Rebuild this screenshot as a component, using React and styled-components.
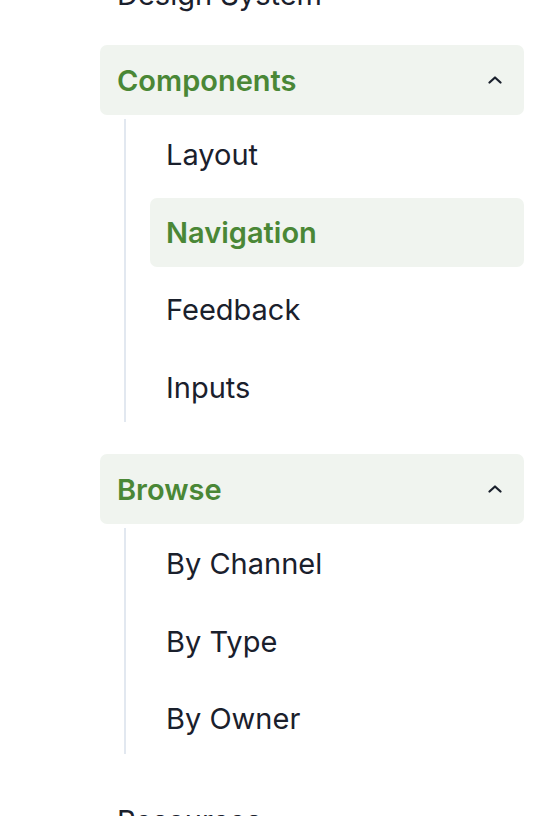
import React from 'react'
import styled, { createGlobalStyle } from 'styled-components'

const GlobalStyle = createGlobalStyle`
  html, body {
    margin: 0;
    padding: 0;
    background: #fff;
  }
  body {
    font-family: Inter, "Noto Sans", sans-serif;
    color: #1a202c;
    -webkit-font-smoothing: antialiased;
  }
`

const Nav = styled.nav`
  display: flex;
  flex-direction: column;
  gap: 16px;
  width: 424px;
  margin-left: 100px;
  margin-top: -41px;
`

const Section = styled.div`
  display: flex;
  flex-direction: column;
`

const TopLink = styled.a`
  display: flex;
  align-items: center;
  justify-content: space-between;
  height: 70px;
  padding: 0 22px 0 17px;
  border-radius: 7px;
  font-size: 29px;
  font-weight: ${p => (p.$active ? 600 : 400)};
  color: ${p => (p.$active ? '#4a8736' : '#1a202c')};
  background: ${p => (p.$active ? '#f0f4ef' : 'transparent')};
  text-decoration: none;
  cursor: pointer;
`

const SubList = styled.ul`
  list-style: none;
  margin: 4px 0 16px 24px;
  padding: 1px 0 0 24px;
  border-left: 2px solid #e2e8f0;
  display: flex;
  flex-direction: column;
  gap: 8px;
`

const SubItem = styled.li`
  display: flex;
  align-items: center;
  height: 69.5px;
  padding-left: 16px;
  border-radius: 7px;
  font-size: 29px;
  font-weight: ${p => (p.$active ? 600 : 400)};
  color: ${p => (p.$active ? '#4a8736' : '#1a202c')};
  background: ${p => (p.$active ? '#f0f4ef' : 'transparent')};
`

const Chevron = () => (
  <svg width="14" height="8" viewBox="0 0 14 8" fill="none">
    <path d="M1.5 6.5 L7 1.5 L12.5 6.5" stroke="#1a202c" strokeWidth="2.2" strokeLinecap="round" strokeLinejoin="round" />
  </svg>
)

const sections = [
  { title: 'Design System' },
  { title: 'Components', open: true, items: ['Layout', 'Navigation', 'Feedback', 'Inputs'], current: 'Navigation' },
  { title: 'Browse', open: true, items: ['By Channel', 'By Type', 'By Owner'] },
  { title: 'Resources' }
]

export default function App () {
  return (
    <>
      <GlobalStyle />
      <Nav>
        {sections.map(s => (
          <Section key={s.title}>
            <TopLink $active={s.open}>
              <span>{s.title}</span>
              {s.open && <Chevron />}
            </TopLink>
            {s.open && (
              <SubList>
                {s.items.map(item => (
                  <SubItem key={item} $active={item === s.current}>{item}</SubItem>
                ))}
              </SubList>
            )}
          </Section>
        ))}
      </Nav>
    </>
  )
}
